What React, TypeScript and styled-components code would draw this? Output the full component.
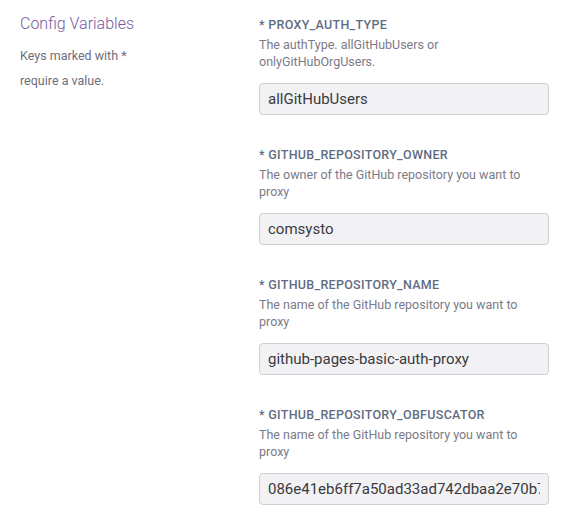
import styled, { createGlobalStyle } from 'styled-components'

const GlobalStyle = createGlobalStyle`
  body {
    margin: 0;
    background: #ffffff;
    font-family: Roboto, 'Liberation Sans', sans-serif;
  }
`

type ConfigVar = {
  name: string
  description: string
  value: string
}

const vars: ConfigVar[] = [
  {
    name: 'PROXY_AUTH_TYPE',
    description: 'The authType. allGitHubUsers or onlyGitHubOrgUsers.',
    value: 'allGitHubUsers',
  },
  {
    name: 'GITHUB_REPOSITORY_OWNER',
    description: 'The owner of the GitHub repository you want to proxy',
    value: 'comsysto',
  },
  {
    name: 'GITHUB_REPOSITORY_NAME',
    description: 'The name of the GitHub repository you want to proxy',
    value: 'github-pages-basic-auth-proxy',
  },
  {
    name: 'GITHUB_REPOSITORY_OBFUSCATOR',
    description: 'The name of the GitHub repository you want to proxy',
    value: '086e41eb6ff7a50ad33ad742dbaa2e70b757b3d1',
  },
]

export default function App() {
  return (
    <>
      <GlobalStyle />
      <Page>
        <Intro>
          <Title>Config Variables</Title>
          <Hint>
            Keys marked with *
            <br />
            require a value.
          </Hint>
        </Intro>
        <Fields>
          {vars.map((v) => (
            <Field key={v.name}>
              <Label>* {v.name}</Label>
              <Description>{v.description}</Description>
              <Input readOnly value={v.value} />
            </Field>
          ))}
        </Fields>
      </Page>
    </>
  )
}

const Page = styled.div`
  display: flex;
  width: 580px;
  height: 520px;
  overflow: hidden;
`

const Intro = styled.div`
  width: 259px;
  flex-shrink: 0;
  padding: 14px 0 0 20px;
  box-sizing: border-box;
`

const Title = styled.h2`
  margin: 0;
  font-size: 16px;
  font-weight: 300;
  line-height: 20px;
  color: #79589f;
`

const Hint = styled.p`
  margin: 9px 0 0;
  font-size: 12.5px;
  line-height: 25px;
  color: #6e6e7c;
`

const Fields = styled.div`
  width: 290px;
  flex-shrink: 0;
  padding-top: 16px;
  display: flex;
  flex-direction: column;
`

const Field = styled.div`
  display: flex;
  flex-direction: column;
  margin-bottom: 31px;
`

const Label = styled.div`
  font-size: 12.5px;
  font-weight: 500;
  letter-spacing: 0.3px;
  line-height: 17px;
  color: #5f6d84;
  margin-bottom: 3px;
`

const Description = styled.div`
  font-size: 12.5px;
  line-height: 17px;
  color: #7a7a88;
  height: 34px;
`

const Input = styled.input`
  margin-top: 13px;
  width: 290px;
  height: 32px;
  box-sizing: border-box;
  padding: 0 8px;
  border: 1px solid #cfcfd4;
  border-radius: 4px;
  background: #f2f2f5;
  font-family: Roboto, 'Liberation Sans', sans-serif;
  font-size: 15px;
  color: #3a3a40;
  outline: none;
`
